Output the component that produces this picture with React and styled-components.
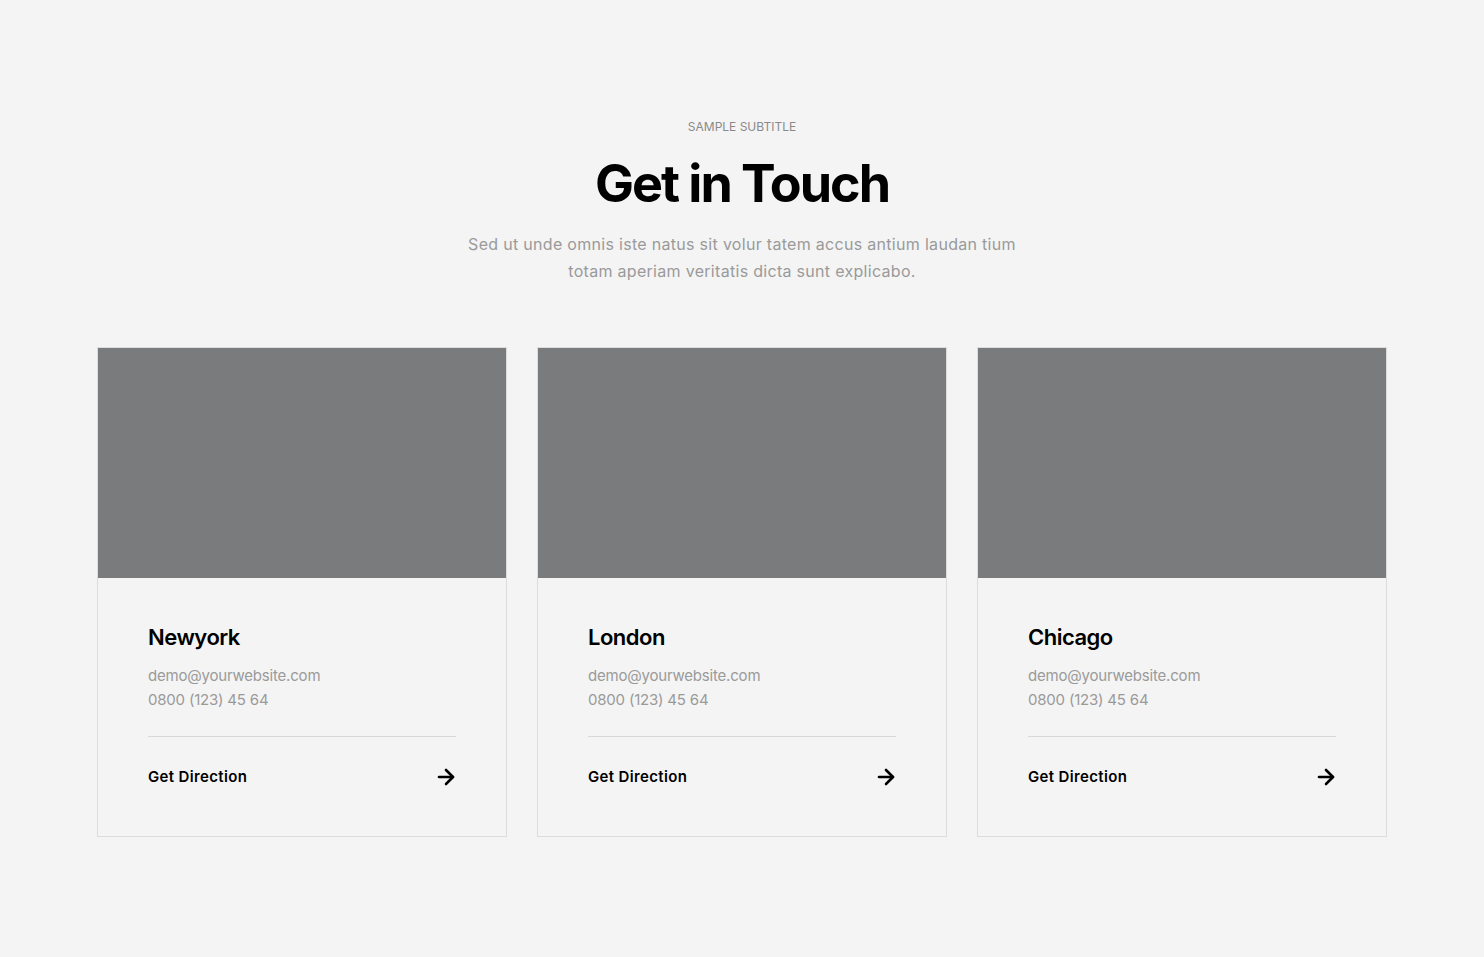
import React from 'react';
import styled, { createGlobalStyle } from 'styled-components';
import { ArrowRight } from 'lucide-react';

const GlobalStyle = createGlobalStyle`
  html, body {
    margin: 0;
    padding: 0;
    background-color: #f4f4f4;
    font-family: Inter, "Noto Sans", Arial, sans-serif;
  }
  * {
    box-sizing: border-box;
  }
`;

const Section = styled.section`
  padding: 119px 0 120px;
  display: flex;
  flex-direction: column;
  align-items: center;
`;

const Subtitle = styled.div`
  font-size: 12px;
  line-height: 16px;
  color: #8a8a8a;
  text-transform: uppercase;
  letter-spacing: 0;
`;

const Title = styled.h2`
  margin: 18px 0 0;
  font-size: 52px;
  line-height: 62px;
  font-weight: 700;
  letter-spacing: -2px;
  color: #000;
`;

const Lead = styled.p`
  margin: 16px 0 0;
  width: 570px;
  text-align: center;
  font-size: 16px;
  line-height: 27px;
  color: #9a9a9a;
  letter-spacing: 0.3px;
`;

const Grid = styled.div`
  margin-top: 62px;
  width: 1290px;
  display: grid;
  grid-template-columns: repeat(3, 1fr);
  gap: 30px;
`;

const Card = styled.div`
  border: 1px solid #dcdcdc;
  background-color: #f4f4f4;
  display: flex;
  flex-direction: column;
`;

const Cover = styled.div`
  height: 230px;
  background-color: #7a7b7c;
`;

const Body = styled.div`
  padding: 45px 50px 47px;
  display: flex;
  flex-direction: column;
`;

const City = styled.h3`
  margin: 0;
  font-size: 22px;
  line-height: 28px;
  font-weight: 600;
  letter-spacing: -0.5px;
  color: #000;
`;

const Info = styled.div`
  margin-top: 13px;
  display: flex;
  flex-direction: column;
`;

const InfoLine = styled.span`
  font-size: 15px;
  line-height: 23.5px;
  color: #9a9a9a;
  letter-spacing: -0.2px;
`;

const Divider = styled.hr`
  margin: 25px 0 0;
  border: none;
  border-top: 1px solid #d8d8d8;
`;

const DirectionLink = styled.a`
  margin-top: 28px;
  display: flex;
  align-items: center;
  justify-content: space-between;
  font-size: 15px;
  line-height: 24px;
  font-weight: 600;
  letter-spacing: 0.35px;
  color: #000;
  text-decoration: none;
  cursor: pointer;
`;

const offices = [
  { city: 'Newyork', email: 'demo@yourwebsite.com', phone: '0800 (123) 45 64' },
  { city: 'London', email: 'demo@yourwebsite.com', phone: '0800 (123) 45 64' },
  { city: 'Chicago', email: 'demo@yourwebsite.com', phone: '0800 (123) 45 64' },
];

function App() {
  return (
    <>
      <GlobalStyle />
      <Section>
        <Subtitle>Sample Subtitle</Subtitle>
        <Title>Get in Touch</Title>
        <Lead>
          Sed ut unde omnis iste natus sit volur tatem accus antium laudan tium totam aperiam veritatis dicta sunt explicabo.
        </Lead>
        <Grid>
          {offices.map((office) => (
            <Card key={office.city}>
              <Cover />
              <Body>
                <City>{office.city}</City>
                <Info>
                  <InfoLine>{office.email}</InfoLine>
                  <InfoLine>{office.phone}</InfoLine>
                </Info>
                <Divider />
                <DirectionLink>
                  Get Direction
                  <ArrowRight size={24} strokeWidth={2.6} style={{ marginRight: -2 }} />
                </DirectionLink>
              </Body>
            </Card>
          ))}
        </Grid>
      </Section>
    </>
  );
}

export default App;
